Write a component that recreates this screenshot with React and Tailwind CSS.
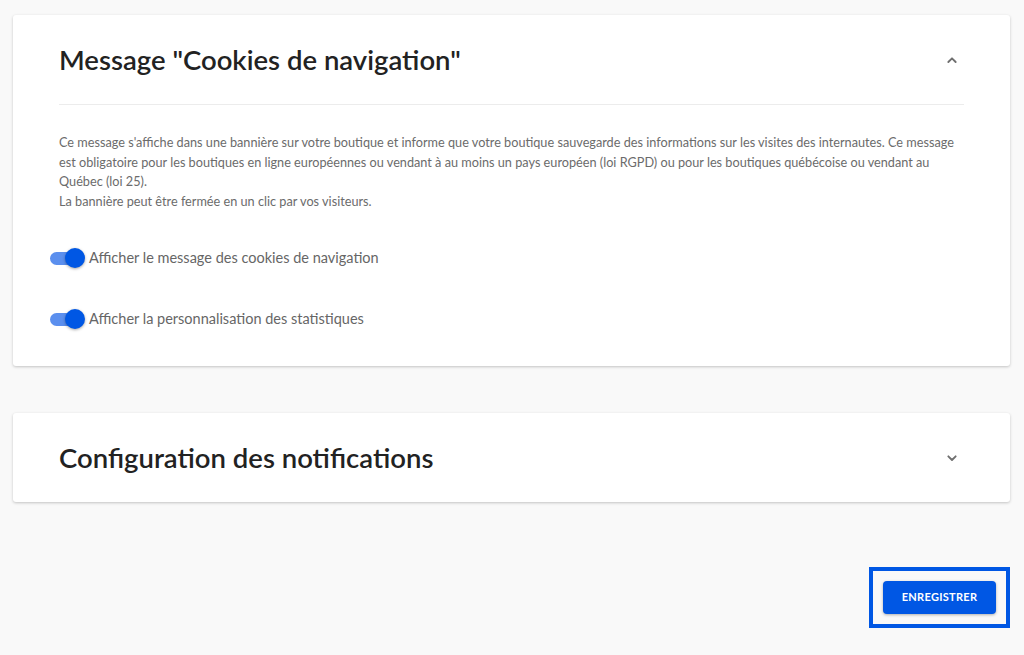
import React from 'react';

const Chevron = ({ up }) => (
  <svg width="16" height="16" viewBox="0 0 24 24" fill="none" stroke="#6f6f6f" strokeWidth="2.8" strokeLinecap="round" strokeLinejoin="round">
    {up ? <path d="M6.5 15l5.5-5.5 5.5 5.5" /> : <path d="M6.5 9.5l5.5 5.5 5.5-5.5" />}
  </svg>
);

const Toggle = ({ label }) => (
  <div className="flex items-center h-6">
    <div className="relative w-[34px] h-6 flex items-center ml-[-9px]">
      <div className="w-[32px] h-[13px] rounded-full bg-[#5b8fee]" />
      <div className="absolute right-[-1px] top-[2px] w-5 h-5 rounded-full bg-[#0057e4] shadow-[0_1px_3px_rgba(0,0,0,0.35)]" />
    </div>
    <span className="ml-[5px] text-[14.5px] text-[#666666]">{label}</span>
  </div>
);

export default function App() {
  return (
    <div className="min-h-[655px] bg-[#f9f9f9] pt-[15px] pl-[13px] pr-[14px] font-['Lato','Liberation_Sans',sans-serif]">
      <div className="bg-white rounded-[3px] shadow-[0_1px_3px_rgba(0,0,0,0.22)] px-[46px] pb-[35px]">
        <div className="h-[90px] pt-[1px] flex items-center justify-between border-b border-[#ececec]">
          <h2 className="text-[27.5px] font-semibold text-[#222222]">Message "Cookies de navigation"</h2>
          <span className="mr-[4px]"><Chevron up /></span>
        </div>
        <p className="mt-[28px] text-[12.7px] leading-[19.5px] text-[#6b6b6b]">
          Ce message s'affiche dans une bannière sur votre boutique et informe que votre boutique sauvegarde des informations sur les visites des internautes. Ce message est obligatoire pour les boutiques en ligne européennes ou vendant à au moins un pays européen (loi RGPD) ou pour les boutiques québécoise ou vendant au Québec (loi 25).
          <br />
          La bannière peut être fermée en un clic par vos visiteurs.
        </p>
        <div className="mt-[35px] flex flex-col gap-[37px]">
          <Toggle label="Afficher le message des cookies de navigation" />
          <Toggle label="Afficher la personnalisation des statistiques" />
        </div>
      </div>

      <div className="mt-[47px] bg-white rounded-[3px] shadow-[0_1px_3px_rgba(0,0,0,0.22)] px-[46px]">
        <div className="h-[89px] flex items-center justify-between">
          <h2 className="text-[27.5px] font-semibold text-[#222222]">Configuration des notifications</h2>
          <span className="mr-[4px]"><Chevron /></span>
        </div>
      </div>

      <div className="mt-[65px] flex justify-end">
        <div className="border-4 border-[#0057e4] p-[10px]">
          <button className="w-[113px] h-[33px] rounded-[4px] bg-[#0057e4] text-white text-[11px] font-bold tracking-[0.3px] shadow-[0_1px_3px_rgba(0,0,0,0.3)]">
            ENREGISTRER
          </button>
        </div>
      </div>
    </div>
  );
}
